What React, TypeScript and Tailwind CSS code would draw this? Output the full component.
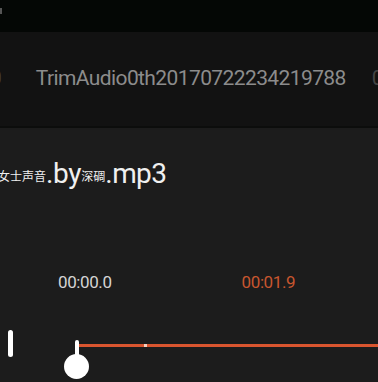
import React from 'react';

const latin = { fontFamily: 'Roboto, "Noto Sans CJK SC", sans-serif' };
const cjk = { fontFamily: '"Noto Sans CJK SC", sans-serif' };

function TrimBar() {
  return (
    <div className="relative flex items-center h-[26px]">
      {/* left trim marker */}
      <div className="ml-[8px] w-[5px] h-[27px] rounded-full bg-white" />
      {/* track */}
      <div className="relative flex-1 ml-[62px] h-[26px]">
        <div className="absolute left-[2px] right-0 top-[14px] h-[3px] bg-[#d9552f]" />
        <div className="absolute left-[69px] top-[14px] w-[3px] h-[3px] bg-[#f5d0c0]" />
        {/* handle */}
        <div className="absolute left-[-11px] top-[10px] flex flex-col items-center">
          <div className="w-[4px] h-[16px] rounded-t-full bg-white" />
          <div className="-mt-[2px] w-[25px] h-[25px] rounded-full bg-white" />
        </div>
      </div>
    </div>
  );
}

export default function App() {
  return (
    <div className="w-[378px] h-[382px] overflow-hidden bg-[#1c1c1c]" style={latin}>
      {/* status bar */}
      <div className="h-[32px] bg-[#040705] relative">
        <div className="absolute left-0 top-[8px] w-[2px] h-[6px] bg-[#555]" />
      </div>

      {/* file tabs */}
      <div className="h-[94px] bg-[#121212] flex items-center whitespace-nowrap overflow-hidden">
        <span className="ml-[-10px] text-[21px] text-[#444]">0</span>
        <span className="ml-[34px] text-[21px] tracking-[-0.6px] text-[#8c8c8c]">
          TrimAudio0th20170722234219788
        </span>
        <span className="ml-[26px] text-[21px] text-[#444]">0</span>
      </div>
      <div className="h-[2px] bg-[#0c0d0c]" />

      {/* current file name */}
      <div className="mt-[28px] h-[36px] flex items-end whitespace-nowrap overflow-hidden text-[#f0f0f0]">
        <span className="ml-[-2px] text-[12px] leading-none mb-[10px]" style={cjk}>
          女士声音
        </span>
        <span className="text-[28px] leading-none mb-[4px] tracking-[-0.3px]">.by</span>
        <span className="text-[12px] leading-none mb-[10px]" style={cjk}>
          深碉
        </span>
        <span className="text-[28px] leading-none mb-[4px] tracking-[-0.6px]">.mp3</span>
      </div>

      {/* times */}
      <div className="mt-[82px] flex text-[17px] leading-none tracking-[-0.4px]">
        <span className="ml-[58px] text-[#d4d4d4]">00:00.0</span>
        <span className="ml-[130px] text-[#c8562f]">00:01.9</span>
      </div>

      {/* trim slider */}
      <div className="mt-[39px]">
        <TrimBar />
      </div>
    </div>
  );
}
